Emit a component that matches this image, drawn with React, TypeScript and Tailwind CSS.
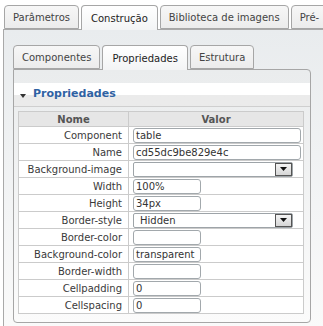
import React from "react";

type Row = { label: string; kind: "wide" | "select" | "small"; value?: string };

const rows: Row[] = [
  { label: "Component", kind: "wide", value: "table" },
  { label: "Name", kind: "wide", value: "cd55dc9be829e4c" },
  { label: "Background-image", kind: "select", value: "" },
  { label: "Width", kind: "small", value: "100%" },
  { label: "Height", kind: "small", value: "34px" },
  { label: "Border-style", kind: "select", value: "Hidden" },
  { label: "Border-color", kind: "small", value: "" },
  { label: "Background-color", kind: "small", value: "transparent" },
  { label: "Border-width", kind: "small", value: "" },
  { label: "Cellpadding", kind: "small", value: "0" },
  { label: "Cellspacing", kind: "small", value: "0" },
];

const Tab = ({ label, active }: { label: string; active?: boolean }) => (
  <div
    className={
      active
        ? "h-[25px] -mb-px flex items-center px-[9px] border border-b-0 border-[#a6a6a6] rounded-t-[4px] bg-gradient-to-b from-white to-[#f3f4f5] text-[#222] whitespace-nowrap"
        : "h-[24px] flex items-center px-[8px] border border-[#a6a6a6] rounded-t-[4px] bg-gradient-to-b from-[#f7f7f7] to-[#ececec] text-[#444] whitespace-nowrap"
    }
  >
    {label}
  </div>
);

const ValueCell = ({ row }: { row: Row }) => {
  if (row.kind === "select") {
    return (
      <div className="w-[160px] h-[15px] border border-[#9ea4a8] rounded-[2px] bg-white flex items-center pl-[6px] relative text-[#333]">
        <span>{row.value}</span>
        <div className="absolute right-0 top-0 w-[17px] h-[13px] border border-[#555] bg-gradient-to-b from-[#f4f4f4] to-[#d6d6d6] flex items-center justify-center">
          <svg width="7" height="4" viewBox="0 0 7 4">
            <path d="M0 0h7L3.5 4z" fill="#111" />
          </svg>
        </div>
      </div>
    );
  }
  return (
    <div
      className={
        (row.kind === "wide" ? "w-[168px]" : "w-[68px]") +
        " h-[15px] border border-[#a2a8ac] rounded-[3px] bg-white flex items-center pl-[2px] text-[#333] overflow-hidden whitespace-nowrap"
      }
    >
      {row.value}
    </div>
  );
};

export default function App() {
  return (
    <div className="w-[323px] h-[326px] bg-white overflow-hidden font-['DejaVu_Sans',sans-serif] text-[10px]">
      {/* outer tabs */}
      <div className="flex items-end gap-[2px] pl-[4px] pt-[4px] h-[29px] relative z-10">
        <Tab label="Parâmetros" />
        <Tab label="Construção" active />
        <Tab label="Biblioteca de imagens" />
        <Tab label="Pré-" />
      </div>

      <div className="ml-[3px] w-[340px] h-[300px] border-l border-t border-[#a9a9a9] bg-gradient-to-b from-[#e9ecee] to-[#fafafa] pt-[15px] pl-[9px]">
        {/* inner tabs */}
        <div className="flex items-end gap-[2px] h-[24px] relative z-10">
          <Tab label="Componentes" />
          <Tab label="Propriedades" active />
          <Tab label="Estrutura" />
        </div>

        <div className="w-[298px] h-[254px] border border-[#a6a6a6] rounded-b-[4px] rounded-tr-[4px] bg-gradient-to-b from-[#eaeced] to-[#fbfbfb] pt-[13px]">
          <div className="h-[24px] border-b border-[#cfcfcf] bg-gradient-to-b from-white from-50% to-[#ebebeb] to-50% flex items-center pl-[6px] gap-[7px]">
            <svg width="6" height="4" viewBox="0 0 6 4" className="mt-[2px]">
              <path d="M0 0h6L3 4z" fill="#333" />
            </svg>
            <span className="font-bold text-[11px] text-[#2f62a3]">Propriedades</span>
          </div>

          <table className="ml-[4px] mt-[4px] border-collapse bg-white w-[285px] table-fixed">
            <colgroup>
              <col className="w-[110px]" />
              <col className="w-[175px]" />
            </colgroup>
            <thead>
              <tr className="h-[15px] bg-[#e6e6e6]">
                <th className="border border-[#cbcbcb] p-0 font-bold text-[#555] leading-[13px]">Nome</th>
                <th className="border border-[#cbcbcb] p-0 font-bold text-[#555] leading-[13px]">Valor</th>
              </tr>
            </thead>
            <tbody>
              {rows.map((r) => (
                <tr key={r.label} className="h-[17px]">
                  <td className="border border-[#cbcbcb] p-0 pr-[6px] text-right text-[#3a3a3a] whitespace-nowrap">
                    {r.label}
                  </td>
                  <td className="border border-[#cbcbcb] p-0 pl-[4px]">
                    <ValueCell row={r} />
                  </td>
                </tr>
              ))}
            </tbody>
          </table>
        </div>
      </div>
    </div>
  );
}
